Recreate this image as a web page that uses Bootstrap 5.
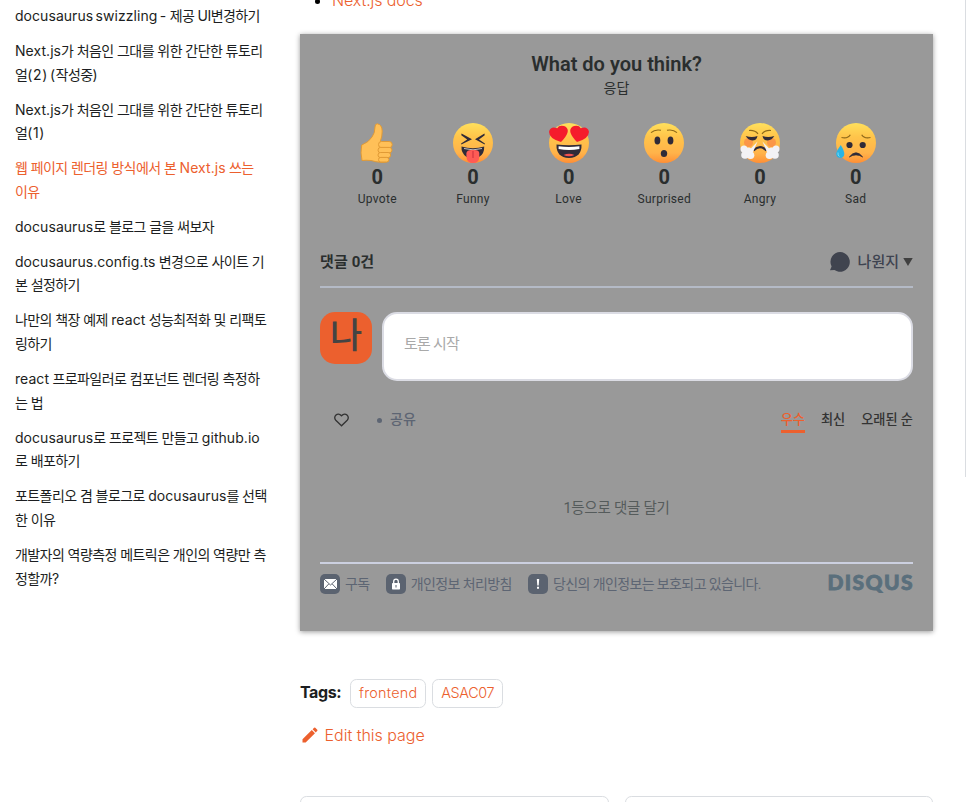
<!DOCTYPE html>
<html lang="ko">
<head>
<meta charset="utf-8">
<meta name="viewport" content="width=device-width, initial-scale=1">
<title>웹 페이지 렌더링 방식에서 본 Next.js 쓰는 이유</title>
<link href="https://cdn.jsdelivr.net/npm/bootstrap@5.3.0/dist/css/bootstrap.min.css" rel="stylesheet">
<style>
:root{--accent:#ec602e;--ink:#1c1e21;--slate:#5d6573}
html,body{height:802px;overflow:hidden}
body{font-family:"Inter","Noto Sans CJK KR",sans-serif;color:var(--ink);background:#fff}
a{color:var(--accent);text-decoration:none}
.page{height:802px;overflow:hidden}
.posts{width:300px;padding:4px 0 0 15px;font-size:14px;line-height:23.8px;font-weight:400;letter-spacing:-.57px;white-space:nowrap}
.posts li{margin-bottom:11.07px}
.posts a{color:var(--ink);display:block}
.posts a.current{color:var(--accent)}
.posts span{letter-spacing:.05px;word-spacing:-1.6px}
.posts .paren{letter-spacing:.6px;word-spacing:-2.5px}
.article{width:633px}
.links{display:flow-root;height:34px;padding-left:32px;line-height:26px;font-weight:300;letter-spacing:-.1px}
.links li{margin-top:-13px}
.links li::marker{color:#000}
.comments{height:597px;background:#999;box-shadow:0 1px 5px rgba(0,0,0,.4);padding:0 20px;font-family:"Roboto","Noto Sans CJK KR",sans-serif;color:#2a2e2e;white-space:nowrap}
.ask{height:89px;padding-top:18px}
.ask h2{font-size:20px;line-height:24px;font-weight:600;margin:0}
.ask p{font-size:14px;line-height:24px;margin:0}
.reactions{width:574.2px;height:112px;margin:0 auto}
.reactions>div{width:95.7px}
.reactions svg{display:block;width:40px;height:40px;margin:0 auto}
.reactions b{display:block;font-size:20px;line-height:28px;font-weight:700}
.reactions small{display:block;font-size:12px;line-height:16px;letter-spacing:.3px}
.bar{height:53px;border-bottom:2px solid #b4bac6;font-size:15px;font-weight:700;padding-top:3px}
.bar .total{letter-spacing:.1px}
.bar .user{font-weight:500;color:#3e4350}
.composer{height:70px;margin-top:24px}
.avatar{width:52px;height:52px;border-radius:15px;background:var(--accent);color:#444;font-size:35px;line-height:49px;font-weight:500}
.box{height:69px;border:2px solid #dbdce4;border-radius:15px;background:#fff;color:#a9a9a9;font-size:15px;padding:0 20px 5px;letter-spacing:-.75px;margin-left:10px}
.tools{height:42px;margin-top:17px;font-size:13.2px;font-weight:500;color:#333}
.tools .heart{margin:0 28px 0 14px}
.tools .share{color:var(--slate);font-size:14px;margin-left:8px;padding-bottom:1px}
.sorts{padding-top:3px;gap:16px}
.active-sort{color:var(--accent);border-bottom:3px solid var(--accent)}
.dot{width:5px;height:5px;border-radius:50%;background:var(--slate)}
.empty{height:121px;padding-top:56px;line-height:24px;font-size:14.5px;color:#555b5b;letter-spacing:-.25px}
.foot{border-top:2px solid #ccd0e0;height:42px;font-size:14px;color:var(--slate);letter-spacing:-.62px}
.foot svg{width:20px;height:20px;margin-right:5px;flex:none}
.foot-item{margin-right:16.3px}
.disqus{font-family:"Lato",sans-serif;font-weight:900;font-size:21px;color:#5a6f7c;line-height:20px;letter-spacing:1.4px;margin-right:-1px;-webkit-text-stroke:.8px #5a6f7c;padding-bottom:4px}
.tags{margin-top:48px;height:29px}
.tags b{font-weight:700;font-size:16px;width:50px;letter-spacing:-.4px;padding-bottom:3px}
.tag{height:29px;border:1px solid #dadde1;border-radius:6.4px;padding:0 8px;font-size:14.4px;line-height:26px;font-weight:300;margin-right:6px;letter-spacing:.22px}
.tag-caps{letter-spacing:-.4px}
.edit{margin-top:14px;height:26px;font-weight:300;letter-spacing:-.02px}
.edit svg{margin-right:4.6px}
.pager{margin-top:48px;gap:16px}
.pager div{height:80px;border:1px solid #dadde1;border-radius:6.4px;flex:1}
.toc{width:1px;height:477px;background:#dadde1;margin-left:32px}
</style>
<script src="https://cdn.jsdelivr.net/npm/bootstrap@5.3.0/dist/js/bootstrap.bundle.min.js"></script>
</head>
<body>
<svg class="position-absolute" width="0" height="0"><defs>
<linearGradient id="face" x1="0" y1="0" x2="0" y2="1"><stop offset="0" stop-color="#ffe05c"/><stop offset=".35" stop-color="#ffc44a"/><stop offset=".75" stop-color="#ffb34a"/><stop offset="1" stop-color="#ff8f35"/></linearGradient>
</defs></svg>
<div class="page d-flex align-items-start">
<nav class="flex-shrink-0">
<ul class="posts list-unstyled mb-0">
<li><a href="#"><span>docusaurus swizzling -</span> 제공 UI변경하기</a></li>
<li><a href="#"><span>Next.js</span>가 처음인 그대를 위한 간단한 튜토리<br>얼<span class="paren">(2) (</span>작성중<span>)</span></a></li>
<li><a href="#"><span>Next.js</span>가 처음인 그대를 위한 간단한 튜토리<br>얼<span class="paren">(1)</span></a></li>
<li><a href="#" class="current">웹 페이지 렌더링 방식에서 본 <span>Next.js</span> 쓰는<br>이유</a></li>
<li><a href="#"><span>docusaurus</span>로 블로그 글을 써보자</a></li>
<li><a href="#"><span>docusaurus.config.ts</span> 변경으로 사이트 기<br>본 설정하기</a></li>
<li><a href="#">나만의 책장 예제 <span>react</span> 성능최적화 및 리팩토<br>링하기</a></li>
<li><a href="#"><span>react</span> 프로파일러로 컴포넌트 렌더링 측정하<br>는 법</a></li>
<li><a href="#"><span>docusaurus</span>로 프로젝트 만들고 <span>github.io</span><br>로 배포하기</a></li>
<li><a href="#">포트폴리오 겸 블로그로 <span>docusaurus</span>를 선택<br>한 이유</a></li>
<li><a href="#">개발자의 역량측정 메트릭은 개인의 역량만 측<br>정할까?</a></li>
</ul>
</nav>
<main class="article flex-shrink-0">
<ul class="links mb-0"><li><a href="#">Next.js docs</a></li></ul>
<section class="comments">
<div class="ask text-center"><h2>What do you think?</h2><p>응답</p></div>
<div class="reactions d-flex text-center">
<div>
<svg viewBox="0 0 40 40"><g fill="#ffc058" stroke="#e19a35" stroke-width="1"><path d="M4.7 22Q12 19 15 14Q18 10 18 4Q18 .8 20.3.8Q25 1.5 25.2 8Q25.3 13 23.5 18L25 32L31 38.5Q24 40.5 14 37.5Q9 37 5 37.5Q3.2 30 4.7 22Z"/><rect x="21.5" y="18.5" width="13.7" height="6.2" rx="3"/><rect x="21" y="24.4" width="14" height="5.4" rx="2.7"/><rect x="21" y="29.5" width="12.7" height="5.1" rx="2.5"/><rect x="21.5" y="34.4" width="10.5" height="4.6" rx="2.3"/></g></svg>
<b>0</b><small>Upvote</small></div>
<div>
<svg viewBox="0 0 40 40"><circle cx="20" cy="20" r="20" fill="url(#face)"/><g fill="#302b38"><path d="M8.5 10.5L19 16.3L8.3 21.5L8.1 20.5L14.2 16.5L8.3 12.3Z"/><path d="M31.5 10.5L22 16.3L31.7 21.5L31.9 20.5L26 16.5L31.7 12.3Z"/><path d="M8.5 23.5Q20 27 31.2 23.5Q31.5 31 26 34H13.5Q8 30 8.5 23.5Z"/></g><path d="M11 25.5Q20 28.2 29 25.5" stroke="#fff" stroke-width=".7" fill="none"/><path d="M13.4 30Q14 26.5 20 27Q26 26.5 26.3 30V34Q26 40 20 40T13.4 34Z" fill="#ff5b55"/><path d="M20 28V35" stroke="#d63a43" stroke-width="1.3"/></svg>
<b>0</b><small>Funny</small></div>
<div>
<svg viewBox="0 0 40 40"><circle cx="20" cy="20" r="20" fill="url(#face)"/><g fill="#f51c2c"><path d="M12 19Q-1 15 .2 8Q2 2.7 8.2 5.2Q10 2 15 3.1Q20 5 18.4 10Q17 14 12 19Z"/><path d="M28 19Q41 15 39.8 8Q38 2.7 31.8 5.2Q30 2 25 3.1Q20 5 21.6 10Q23 14 28 19Z"/></g><path d="M7.5 21.5Q20 23 32.5 21.5Q33 34.5 20 35Q7 34.5 7.5 21.5Z" fill="#302b38"/><path d="M9.6 23.3Q20 24.5 30.4 23.3V26Q20 28 9.6 26Z" fill="#fff"/><path d="M14.5 32Q20 29.5 25.5 32Q20 34.5 14.5 32Z" fill="#f2504f"/></svg>
<b>0</b><small>Love</small></div>
<div>
<svg viewBox="0 0 40 40"><circle cx="20" cy="20" r="20" fill="url(#face)"/><g fill="#302b38"><ellipse cx="13.4" cy="17.5" rx="2.9" ry="3.9"/><ellipse cx="26.5" cy="17.5" rx="2.9" ry="3.9"/><ellipse cx="20" cy="30.5" rx="3.2" ry="3.6"/></g><path d="M7 9.7Q11 6 17 7.3M33 9.7Q29 6 23 7.3" fill="none" stroke="#8d6819" stroke-width="1.1"/></svg>
<b>0</b><small>Surprised</small></div>
<div>
<svg viewBox="0 0 40 40"><circle cx="20" cy="20" r="20" fill="url(#face)"/><g fill="#f65d43" opacity=".4"><circle cx="8.5" cy="19.5" r="4.5"/><circle cx="31.5" cy="19.5" r="4.5"/></g><path d="M9 7.5Q15 7 18 10.8M31 7.5Q25 7 22 10.8" fill="none" stroke="#8d6819" stroke-width="1.2"/><g fill="#302b38"><path d="M5.7 13Q12 15 17.5 13Q16.7 17.5 12.3 17.5Q8 17 5.7 13Z"/><path d="M34.3 13Q28 15 22.5 13Q23.3 17.5 27.7 17.5Q32 17 34.3 13Z"/></g><path d="M13.5 27.5Q20 21 26.5 27.5" fill="none" stroke="#302b38" stroke-width="2.2"/><g fill="#f3f2f5"><path d="M17.5 18.5L13 29H7.5Z"/><path d="M22.5 18.5L27 29H32.5Z"/><circle cx="4" cy="26" r="3.5"/><circle cx="5" cy="32" r="3.8"/><circle cx="10.5" cy="32.3" r="3.8"/><circle cx="8.5" cy="28" r="3.5"/><circle cx="36" cy="26" r="3.5"/><circle cx="35" cy="32" r="3.8"/><circle cx="29.5" cy="32.3" r="3.8"/><circle cx="31.5" cy="28" r="3.5"/></g></svg>
<b>0</b><small>Angry</small></div>
<div>
<svg viewBox="0 0 40 40"><circle cx="20" cy="20" r="20" fill="url(#face)"/><g fill="#302b38"><circle cx="13.5" cy="22" r="3.1"/><circle cx="26.7" cy="22" r="3.1"/></g><path d="M13.3 34Q20 25.5 26.7 34Q20 29.8 13.3 34Z" fill="#302b38" stroke="#302b38" stroke-width=".7"/><path d="M5.5 14.5Q12 15.8 14.3 11.7M34.5 14.5Q28 15.8 25.7 11.7" fill="none" stroke="#8d6819" stroke-width="1.2"/><path d="M4.7 22Q8.3 27.5 8.3 31Q8 35 4.1 35Q.3 34.5.2 30.5Q1 27 4.7 22Z" fill="#28b4e5"/><path d="M2 29.5Q1.5 32.5 3.5 33.5" stroke="#7cdaf6" fill="none"/></svg>
<b>0</b><small>Sad</small></div>
</div>
<div class="bar d-flex justify-content-between align-items-center"><span class="total">댓글 0건</span>
<span class="user d-flex align-items-center"><svg class="me-2" width="20" height="20" viewBox="0 0 20 20"><path d="M10.2 0A9.8 9.9 0 1 1 4.5 18.1L0 18.2L1.6 14.5A9.8 9.9 0 0 1 10.2 0Z" fill="#40444f"/></svg>나원지<svg class="ms-1" width="10" height="10" viewBox="0 0 11 10"><path d="M.3.5H10.7L5.5 9.5Z" fill="#404040"/></svg></span></div>
<div class="composer d-flex"><div class="avatar text-center flex-shrink-0">나</div><div class="box flex-grow-1 d-flex align-items-center">토론 시작</div></div>
<div class="tools d-flex align-items-center">
<svg class="heart" width="15" height="14" viewBox="0 0 15 14"><path d="M7.5 12.8L1.8 7.2C-1 4 3.3-1.8 7.5 2.8C11.7-1.8 16 4 13.2 7.2Z" fill="none" stroke="#333" stroke-width="1.3"/></svg>
<i class="dot"></i><span class="share">공유</span>
<div class="sorts ms-auto d-flex"><span class="active-sort">우수</span><span>최신</span><span>오래된 순</span></div></div>
<div class="empty text-center">1등으로 댓글 달기</div>
<div class="foot d-flex align-items-center">
<svg viewBox="0 0 20 20"><rect width="20" height="20" rx="5" fill="#5b6370"/><rect x="4" y="5" width="13" height="10" rx="1" fill="#fff"/><path d="M4 5L10.5 11L17 5M4 15L8.7 10M17 15L12.3 10" fill="none" stroke="#5b6370"/></svg><span class="foot-item">구독</span>
<svg viewBox="0 0 20 20"><rect width="20" height="20" rx="5" fill="#5b6370"/><rect x="6" y="9" width="8" height="6.5" rx=".7" fill="#fff"/><path d="M7.7 9V7.5Q7.7 5.2 10 5.2T12.3 7.5V9" fill="none" stroke="#fff" stroke-width="1.3"/><path d="M10 11V13.5" stroke="#5b6370"/></svg><span class="foot-item">개인정보 처리방침</span>
<svg viewBox="0 0 20 20"><rect width="20" height="20" rx="5" fill="#5b6370"/><path d="M8.8 5H11.2L10.7 11.5H9.3ZM9 12.7H11V14.7H9Z" fill="#fff"/></svg><span>당신의 개인정보는 보호되고 있습니다.</span>
<span class="disqus ms-auto">DISQUS</span></div>
</section>
<div class="tags d-flex align-items-center"><b>Tags:</b><a class="tag" href="#">frontend</a><a class="tag tag-caps" href="#">ASAC07</a></div>
<div class="edit d-flex align-items-center"><a href="#" class="d-flex align-items-center"><svg width="20" height="20" viewBox="0 0 40 40"><path fill="currentColor" d="m34.5 11.7-3 3.1-6.3-6.3 3.1-3q.5-.5 1.2-.5t1.1.5l3.9 3.9q.5.4.5 1.1t-.5 1.2zM5 28.7 23.6 10.1l6.3 6.3L11.3 35H5v-6.3z"/></svg>Edit this page</a></div>
<div class="pager d-flex"><div></div><div></div></div>
</main>
<div class="toc flex-shrink-0"></div>
</div>
</body>
</html>
